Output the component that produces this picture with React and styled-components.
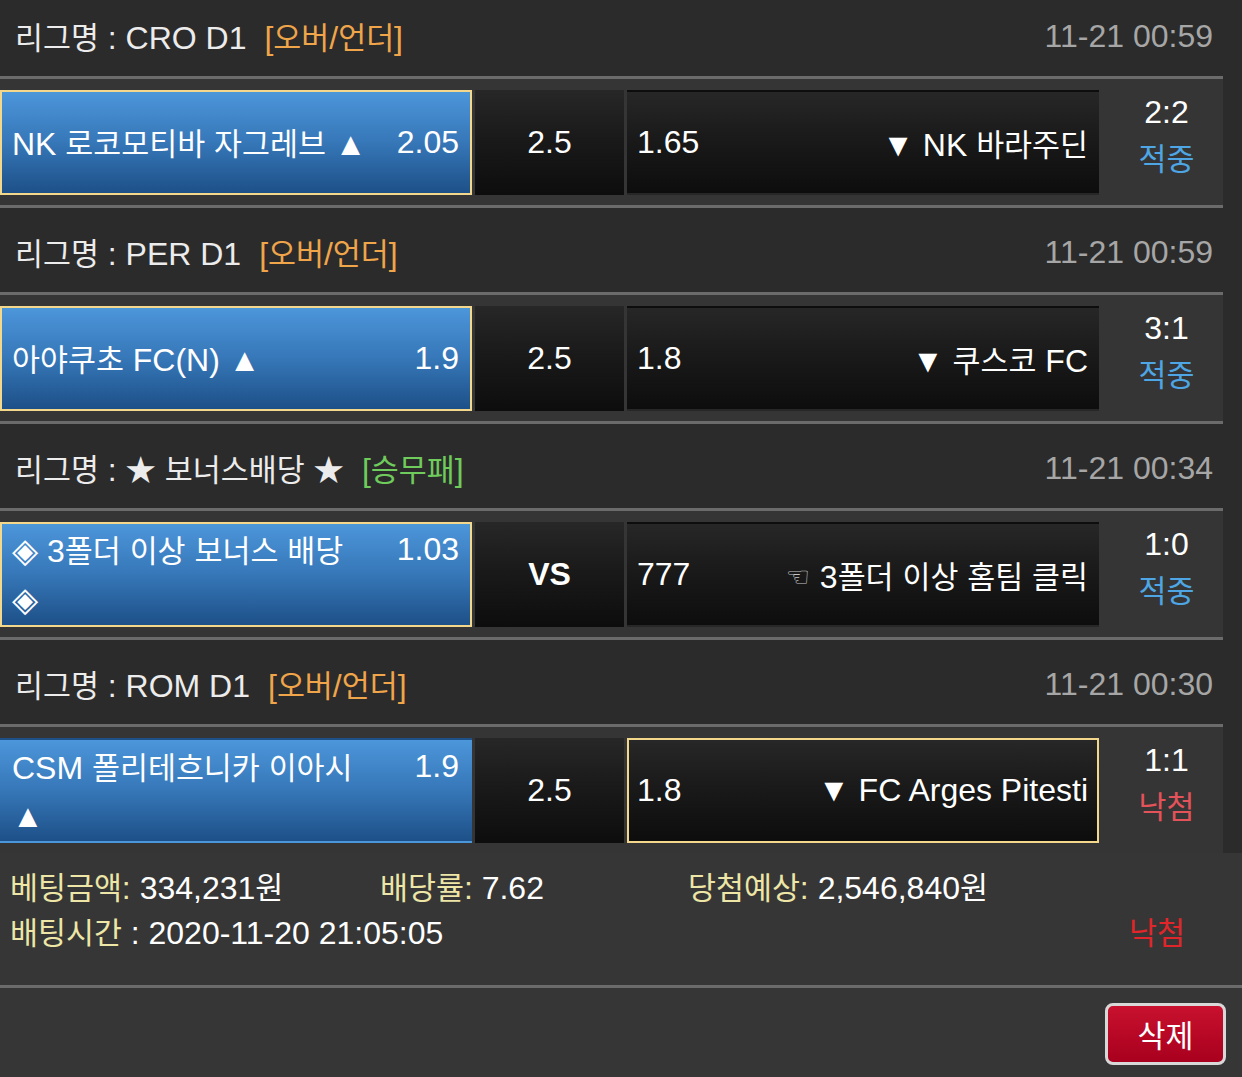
import styled, { createGlobalStyle } from "styled-components";

const GlobalStyle = createGlobalStyle`
  * { box-sizing: border-box; }
  html, body { margin: 0; overflow: hidden; }
  body {
    background: #363636;
    color: #fff;
    font-family: "Liberation Sans", "Noto Sans CJK KR", sans-serif;
    font-size: 32px;
  }
`;

const Page = styled.div`
  min-height: 100vh;
  background: #363636;
`;

const MatchList = styled.div`
  margin-top: -8px;
  background: #2b2b2b;
`;

const Block = styled.section`
  width: 1223px;
  & + & {
    border-top: 3px solid #6b6b6b;
  }
`;

const Header = styled.div`
  height: 87px;
  display: flex;
  align-items: center;
  justify-content: space-between;
  padding: 4px 10px 0 15px;
  background: #2b2b2b;
  border-bottom: 3px solid #6b6b6b;
  color: #ececec;
`;

const Tag = styled.span`
  margin-left: 18px;
  color: ${(p) => (p.$green ? "#6fcb5c" : "#f0a54a")};
`;

const Time = styled.span`
  color: #a6a6a6;
`;

const BetArea = styled.div`
  padding: 11px 0 10px;
  background: #353535;
`;

const BetRow = styled.div`
  height: 105px;
  display: grid;
  grid-template-columns: 472px 149px 472px 1fr;
  column-gap: 3px;
`;

const HomeCell = styled.div`
  display: flex;
  align-items: center;
  padding: 0 11px 0 10px;
  line-height: 48px;
  background: linear-gradient(to bottom, #4c96da 0%, #3677b8 50%, #1d5088 100%);
  border: 2px solid ${(p) => (p.$picked ? "#f3d88c" : "transparent")};
`;

const CellText = styled.div`
  width: 100%;
  white-space: nowrap;
`;

const Odds = styled.span`
  float: right;
  margin-left: 16px;
`;

const MidCell = styled.div`
  display: flex;
  align-items: center;
  justify-content: center;
  background: linear-gradient(to bottom, #272727 0%, #1a1a1a 45%, #0d0d0d 100%);
  font-weight: ${(p) => (p.$bold ? 700 : 400)};
`;

const AwayCell = styled.div`
  display: flex;
  align-items: center;
  justify-content: space-between;
  padding: 0 9px 0 8px;
  white-space: nowrap;
  background: linear-gradient(to bottom, #272727 0%, #1a1a1a 45%, #0d0d0d 100%);
  border: 2px solid ${(p) => (p.$picked ? "#f3d88c" : "transparent")};
`;

const Hand = styled.span`
  font-family: "DejaVu Sans", sans-serif;
  font-size: 27px;
  color: #c4c4c4;
  margin-right: 10px;
  vertical-align: 2px;
`;

const Diamond = styled.span`
  font-family: "DejaVu Sans", sans-serif;
  font-size: 34px;
`;

const ScoreCol = styled.div`
  display: flex;
  flex-direction: column;
  align-items: center;
  padding-left: 8px;
  line-height: 45px;
`;

const Result = styled.span`
  color: ${(p) => (p.$win ? "#4ea6e4" : "#e4525a")};
`;

const Ko = styled.span`
  font-family: "Noto Sans CJK KR", sans-serif;
  font-size: 0.95em;
`;

const Summary = styled.div`
  display: grid;
  grid-template-columns: 370px 308px 1fr;
  line-height: 43px;
  padding: 12px 57px 30px 10px;
  border-bottom: 3px solid #6b6b6b;
`;

const Label = styled.span`
  color: #ede6a6;
`;

const TimeLine = styled.div`
  grid-column: 1 / 3;
`;

const Lost = styled.div`
  justify-self: end;
  color: #e0262a;
`;

const Actions = styled.div`
  display: flex;
  justify-content: flex-end;
  padding: 15px 16px 12px;
`;

const DeleteButton = styled.button`
  width: 121px;
  height: 62px;
  border: 3px solid #d8d8d8;
  border-radius: 8px;
  background: linear-gradient(to bottom, #c8112e 0%, #a8001e 100%);
  color: #fff;
  font-family: inherit;
  font-size: 32px;
  padding: 0;
  cursor: pointer;
`;

const KO = /([\u3131-\u318E\uAC00-\uD7A3\u2605]+|\u25C8)/;

function Txt({ children }) {
  return String(children)
    .split(KO)
    .map((s, i) => {
      if (i % 2 === 0) return s;
      if (s === "◈") return <Diamond key={i}>{s}</Diamond>;
      return <Ko key={i}>{s}</Ko>;
    });
}

const matches = [
  {
    league: "CRO D1", tag: "[오버/언더]", time: "11-21 00:59",
    home: ["NK 로코모티바 자그레브 ▲"], homeOdds: "2.05", mid: "2.5",
    awayOdds: "1.65", away: "▼ NK 바라주딘", score: "2:2", win: true, pick: "home",
  },
  {
    league: "PER D1", tag: "[오버/언더]", time: "11-21 00:59",
    home: ["아야쿠초 FC(N) ▲"], homeOdds: "1.9", mid: "2.5",
    awayOdds: "1.8", away: "▼ 쿠스코 FC", score: "3:1", win: true, pick: "home",
  },
  {
    league: "★ 보너스배당 ★", tag: "[승무패]", green: true, time: "11-21 00:34",
    home: ["◈ 3폴더 이상 보너스 배당", "◈"], homeOdds: "1.03", mid: "VS", bold: true,
    awayOdds: "777", away: "3폴더 이상 홈팀 클릭", hand: true, score: "1:0", win: true, pick: "home",
  },
  {
    league: "ROM D1", tag: "[오버/언더]", time: "11-21 00:30",
    home: ["CSM 폴리테흐니카 이아시", "▲"], homeOdds: "1.9", mid: "2.5",
    awayOdds: "1.8", away: "▼ FC Arges Pitesti", score: "1:1", win: false, pick: "away",
  },
];

function Match({ m }) {
  return (
    <Block>
      <Header>
        <span>
          <Txt>{`리그명 : ${m.league}`}</Txt>
          <Tag $green={m.green}><Txt>{m.tag}</Txt></Tag>
        </span>
        <Time>{m.time}</Time>
      </Header>
      <BetArea>
        <BetRow>
          <HomeCell $picked={m.pick === "home"}>
            <CellText>
              <Odds>{m.homeOdds}</Odds>
              {m.home.map((line, i) => (
                <span key={i}>
                  {i > 0 && <br />}
                  <Txt>{line}</Txt>
                </span>
              ))}
            </CellText>
          </HomeCell>
          <MidCell $bold={m.bold}>{m.mid}</MidCell>
          <AwayCell $picked={m.pick === "away"}>
            <span>{m.awayOdds}</span>
            <span>
              {m.hand && <Hand>☜</Hand>}
              <Txt>{m.away}</Txt>
            </span>
          </AwayCell>
          <ScoreCol>
            <span>{m.score}</span>
            <Result $win={m.win}><Txt>{m.win ? "적중" : "낙첨"}</Txt></Result>
          </ScoreCol>
        </BetRow>
      </BetArea>
    </Block>
  );
}

export default function App() {
  return (
    <Page>
      <GlobalStyle />
      <MatchList>
        {matches.map((m, i) => (
          <Match key={i} m={m} />
        ))}
      </MatchList>
      <Summary>
        <div><Label><Txt>베팅금액:</Txt></Label> <Txt>334,231원</Txt></div>
        <div><Label><Txt>배당률:</Txt></Label> 7.62</div>
        <div><Label><Txt>당첨예상:</Txt></Label> <Txt>2,546,840원</Txt></div>
        <TimeLine><Label><Txt>배팅시간</Txt></Label> : 2020-11-20 21:05:05</TimeLine>
        <Lost><Txt>낙첨</Txt></Lost>
      </Summary>
      <Actions>
        <DeleteButton><Txt>삭제</Txt></DeleteButton>
      </Actions>
    </Page>
  );
}
